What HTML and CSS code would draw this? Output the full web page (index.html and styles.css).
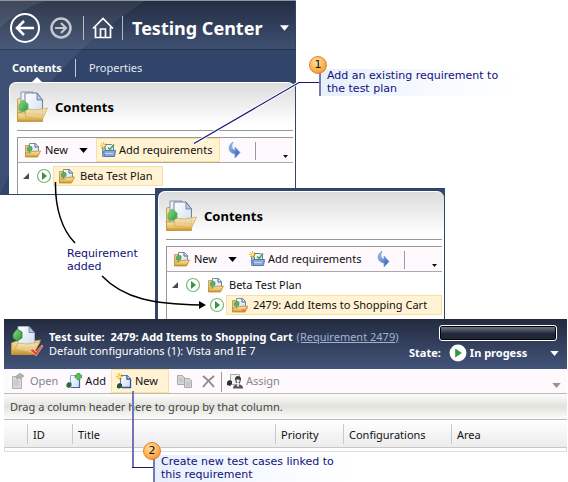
FILE: index.html
```html
<!DOCTYPE html>
<html lang="en">
<head>
<meta charset="utf-8">
<title>Testing Center</title>
<link rel="stylesheet" href="styles.css">
</head>
<body>
<svg class="defs" aria-hidden="true">
  <defs>
    <linearGradient id="gold" x1="0" y1="0" x2="0" y2="1"><stop offset="0" stop-color="#f7e3a8"/><stop offset=".6" stop-color="#e8c26a"/><stop offset="1" stop-color="#c48d24"/></linearGradient>
    <linearGradient id="flap" x1="0" y1="0" x2="0" y2="1"><stop offset="0" stop-color="#f6e3b0"/><stop offset="1" stop-color="#e6c273"/></linearGradient>
    <linearGradient id="paper" x1="0" y1="0" x2="1" y2="1"><stop offset="0" stop-color="#fff"/><stop offset="1" stop-color="#cddcf0"/></linearGradient>
    <linearGradient id="blue" x1="0" y1="0" x2="1" y2="1"><stop offset="0" stop-color="#a9c8f0"/><stop offset="1" stop-color="#2458b4"/></linearGradient>
    <linearGradient id="leaf" x1="0" y1="0" x2="1" y2="1"><stop offset="0" stop-color="#8ce07f"/><stop offset="1" stop-color="#2e9140"/></linearGradient>
  </defs>
  <symbol id="folder" viewBox="0 0 32 32">
    <path d="M.5 8l4-1v4l4 2v17h-8z" fill="url(#gold)" stroke="#b8934a" stroke-width=".8"/>
    <path d="M4 1h12v24H6L4 22z" fill="#eef3fa" stroke="#8795ab"/>
    <path d="M8 2h12l5.500 7v17H8z" fill="url(#paper)" stroke="#71819a"/>
    <path d="M20 2v7h5.500z" fill="#b8cbe4" stroke="#5f7697" stroke-width=".8"/>
    <path d="M.5 22h8l17 2v6.500H.5z" fill="url(#gold)" stroke="#bd9242" stroke-width=".8"/>
    <path d="M8 18l10 1 12.500-2-5 11-17-2z" fill="url(#flap)" fill-opacity=".88" stroke="#d3ab5c" stroke-width=".8"/>
    <path d="M2 14l4-5 5 4v5l-5 3-4-2z" fill="url(#leaf)" stroke="#58b65b" stroke-width=".8"/>
  </symbol>
  <symbol id="suite" viewBox="0 0 32 32">
    <path d="M.5 18l10-4h7l1 3 11-2-7 14.500H.5z" fill="url(#gold)" stroke="#c79b47" stroke-width=".8"/>
    <path d="M7 1.500h11l5.500 6V22H7z" fill="url(#paper)" stroke="#a6b5cb" stroke-width=".8"/>
    <path d="M18 1.500v6h5.500z" fill="#b8cbe4" stroke="#5f7697" stroke-width=".8"/>
    <path d="M7 18l9 1 13-2-7 11-18-4z" fill="url(#flap)" fill-opacity=".85" stroke="#d3ab5c" stroke-width=".8"/>
    <path d="M2 9l4-5 5 3v6l-5 3-4-3z" fill="url(#leaf)" stroke="#2f7a3a" stroke-width=".8"/>
  </symbol>
  <symbol id="check" viewBox="0 0 32 32">
    <path d="M19 25l3-1 3 3 6-7 1 1-7 10z" fill="#e8492e" stroke="#f6c0b0" stroke-width=".7"/>
  </symbol>
  <symbol id="folder-small" viewBox="0 0 16 16">
    <path d="M.5 3.500h4v11h-4z" fill="#e7c57b" stroke="#b6924c" stroke-width=".8"/>
    <path d="M4.500 1.500h6l3 3v8h-9z" fill="url(#paper)" stroke="#7e8ca3"/>
    <path d="M10 1.500V5h3.500" fill="none" stroke="#4a6288"/>
    <path d="M.5 11h5l1-1.500 9-.5-3 6H.5z" fill="url(#gold)" stroke="#bd8d31" stroke-width=".8"/>
    <path d="M2.500 6l2-2 2.500 1v3l-2 1.500-2.500-1z" fill="#58b45a" stroke="#388d45" stroke-width=".6"/>
  </symbol>
  <symbol id="plan" viewBox="0 0 16 16">
    <path d="M2.500 5.500h10v9h-10z" fill="#a4bbdf" stroke="#6f8cbc"/>
    <path d="M5.500 2.500h6l2 2v6h-8z" fill="url(#paper)" stroke="#6480ad"/>
    <path d="M3.500 9.500l2-1h10l-1 6h-10z" fill="#8ba9d8" stroke="#5576ab"/>
    <path d="M5 11.500h8" stroke="#c6d7f0"/>
    <path d="M8 5.500l2 2 4-5" fill="none" stroke="#45a14a" stroke-width="1.500"/>
    <path d="M3.500 0v7M0 3.500h7M1 1l5 5M6 1L1 6" stroke="#f1bd26"/><path d="M2.500 2.500h2v2h-2z" fill="#fff6b4"/>
  </symbol>
  <symbol id="refresh" viewBox="0 0 16 18">
    <path d="M6 1C0 5 1 12 8 13v4l5-5.500L8 6v3.500C4.500 8 4 5 6 1z" fill="url(#blue)" stroke="#6f98d8" stroke-width=".7"/>
  </symbol>
  <symbol id="play" viewBox="0 0 16 16">
    <circle cx="8" cy="8" r="6.500" fill="#fff" stroke="#77b879" stroke-width="1.200"/>
    <path d="M6 4l5 4-5 4z" fill="#369443"/>
  </symbol>
  <symbol id="expand" viewBox="0 0 8 8"><path d="M7 1v6H1z" fill="#4a4a4a"/></symbol>
  <symbol id="caret" viewBox="0 0 10 6"><path d="M0 0h10L5 6z" fill="currentColor"/></symbol>
  <symbol id="open" viewBox="0 0 16 18">
    <path d="M1.500 4.500h7l2 2v10h-9z" fill="#d9d9d9" stroke="#b0b0b0"/>
    <path d="M3 9h5M3 11h5M3 13h5" stroke="#bdbdbd"/>
    <path d="M5 6c0-3 2-4 4-4V1l4 3-4 3V5C7 5 7 6 7 7z" fill="#b3b3b3" stroke="#999" stroke-width=".6"/>
  </symbol>
  <symbol id="add" viewBox="0 0 16 16">
    <path d="M4.500 2.500h9v12h-9z" fill="url(#paper)" stroke="#8fabd6"/>
    <path d="M13.500 6v8.500H5" fill="none" stroke="#3867ae" stroke-width="1.200"/>
    <path d="M.5 11l2-2 3 1v3l-2.500 2-2.500-1z" fill="#33683f"/>
    <path d="M11 0h3v2h2v3h-2v2h-3V5H9V2h2z" fill="#57bd59" stroke="#398f41" stroke-width=".5"/>
  </symbol>
  <symbol id="new" viewBox="0 0 16 16">
    <path d="M4.500 2.500h7l3 3v9h-10z" fill="url(#paper)" stroke="#5c7db4"/>
    <path d="M14.500 6v8.500H6M11 2.500V6h3.500" fill="none" stroke="#2d599f" stroke-width="1.300"/>
    <path d="M1 12l2-2 3 1v3l-2.500 1.500L1 15z" fill="#2b512e"/>
    <path d="M3.500 0v7M0 3.500h7M1 1l5 5M6 1L1 6" stroke="#f1bd26"/><path d="M2.500 2.500h2v2h-2z" fill="#fff6b4"/>
  </symbol>
  <symbol id="copy" viewBox="0 0 16 14">
    <path d="M.5 1.500h5l2 2v7h-7zM7.500 4.500h5l2 2v7h-7z" fill="#d4d4d4" stroke="#aaa"/>
    <path d="M2 5h4M2 7h4M9 9h4M9 11h4" stroke="#bbb"/>
  </symbol>
  <symbol id="delete" viewBox="0 0 13 13"><path d="M1 1c4 3 8 7 11 11M12 1C8 4 4 8 1 12" fill="none" stroke="#8d8d8d" stroke-width="2"/></symbol>
  <symbol id="assign" viewBox="0 0 16 16">
    <path d="M3.500 1.500h9v10h-9z" fill="#f2f2f2" stroke="#aaa"/>
    <path d="M0 9l2-2 3 1v3l-2 2-3-1z" fill="#333"/>
    <path d="M8 6c0-4 6-4 6 0l-1 4H9z" fill="#393939"/><path d="M9.500 6.500h3v2L11 10.500l-1.500-2z" fill="#eee"/>
    <path d="M6 15.500c0-3 2-4 3.500-4l1.500 2 1.500-2c1.500 0 3.500 1 3.500 4z" fill="#555"/><path d="M10 11.500h2l-1 3z" fill="#fff"/>
  </symbol>
</svg>

<main class="canvas">
  <section class="window main-window">
    <svg class="sheen" viewBox="0 0 296 195" preserveAspectRatio="none" aria-hidden="true">
      <path d="M0 0h145Q90 35 50 82L0 195z" fill="#fff" fill-opacity=".06"/>
      <path d="M0 0h45Q20 8 0 27z" fill="#fff" fill-opacity=".08"/>
    </svg>
    <header class="nav">
      <button class="plain" aria-label="Back"><svg width="30" height="30" viewBox="0 0 30 30"><circle cx="15" cy="15" r="14" fill="none" stroke="#fff" stroke-width="2"/><path d="M24 15H8M14 8l-7 7 7 7" fill="none" stroke="#fff" stroke-width="2.500"/></svg></button>
      <button class="plain" aria-label="Forward"><svg width="22" height="22" viewBox="0 0 22 22"><circle cx="11" cy="11" r="9.500" fill="none" stroke="#c4c7cd" stroke-width="2.500"/><path d="M5 11h11M11 6l5 5-5 5" fill="none" stroke="#c4c7cd" stroke-width="2.200"/></svg></button>
      <span class="nav-rule"></span>
      <button class="plain" aria-label="Home"><svg width="22" height="22" viewBox="0 0 22 22"><path d="M1 11.500L11 1.500l10 10M3.500 10v10.500h15V10M8.500 20v-8h5v8" fill="none" stroke="#fff" stroke-width="1.700"/></svg></button>
      <span class="nav-rule"></span>
      <h1>Testing Center</h1>
      <button class="plain nav-menu" aria-label="Switch center"><svg width="9" height="6"><use href="#caret"/></svg></button>
    </header>
    <nav class="tabs">
      <a class="tab active" href="#contents">Contents</a>
      <a class="tab" href="#properties">Properties</a>
    </nav>
    <div class="card" id="contents">
      <div class="card-title"><svg width="32" height="32"><use href="#folder"/></svg><h2>Contents</h2></div>
      <div class="card-body">
        <div class="toolbar">
          <button class="tool new-plan"><svg width="16" height="16"><use href="#folder-small"/></svg>New<svg class="drop" width="9" height="5"><use href="#caret"/></svg></button>
          <button class="tool add-req hot"><svg width="16" height="16"><use href="#plan"/></svg>Add requirements</button>
          <button class="tool" aria-label="Refresh"><svg width="16" height="18"><use href="#refresh"/></svg></button>
          <span class="tool-rule"></span>
          <button class="plain overflow" aria-label="More"><svg width="5" height="3"><use href="#caret"/></svg></button>
        </div>
        <ul class="tree">
          <li><svg width="8" height="8"><use href="#expand"/></svg><svg width="16" height="16"><use href="#play"/></svg><span class="node hot"><svg width="16" height="16"><use href="#folder-small"/></svg>Beta Test Plan</span></li>
        </ul>
      </div>
    </div>
  </section>

  <section class="window result-window">
    <div class="card">
      <div class="card-title"><svg width="32" height="32"><use href="#folder"/></svg><h2>Contents</h2></div>
      <div class="card-body">
        <div class="toolbar">
          <button class="tool new-plan"><svg width="16" height="16"><use href="#folder-small"/></svg>New<svg class="drop" width="9" height="5"><use href="#caret"/></svg></button>
          <button class="tool add-req"><svg width="16" height="16"><use href="#plan"/></svg>Add requirements</button>
          <button class="tool" aria-label="Refresh"><svg width="16" height="18"><use href="#refresh"/></svg></button>
          <span class="tool-rule"></span>
          <button class="plain overflow" aria-label="More"><svg width="5" height="3"><use href="#caret"/></svg></button>
        </div>
        <ul class="tree">
          <li><svg width="8" height="8"><use href="#expand"/></svg><svg width="16" height="16"><use href="#play"/></svg><span class="node"><svg width="16" height="16"><use href="#folder-small"/></svg>Beta Test Plan</span></li>
          <li class="child"><svg width="16" height="16"><use href="#play"/></svg><span class="node wide hot"><svg width="16" height="16"><use href="#folder-small"/><use href="#check"/></svg>2479: Add Items to Shopping Cart</span></li>
        </ul>
      </div>
    </div>
  </section>

  <section class="suite-window">
    <header class="suite-head">
      <svg width="32" height="32"><use href="#suite"/><use href="#check"/></svg>
      <div class="suite-text">
        <p><b>Test suite:&nbsp; 2479: Add Items to Shopping Cart</b> <a href="#requirement">(Requirement 2479)</a></p>
        <p>Default configurations (1): Vista and IE 7</p>
      </div>
      <div class="suite-state">
        <div class="meter"></div>
        <div class="state-row">
          <label for="state">State:</label>
          <svg width="18" height="18" viewBox="0 0 16 16"><circle cx="8" cy="8" r="7.500" fill="#fff"/><path d="M5.500 4l6 4-6 4z" fill="#369443"/></svg>
          <select id="state"><option>In progess</option></select>
          <svg class="state-caret" width="9" height="5"><use href="#caret"/></svg>
        </div>
      </div>
    </header>
    <div class="suite-tools">
      <button class="tool" disabled><svg width="16" height="18"><use href="#open"/></svg>Open</button>
      <button class="tool"><svg width="16" height="16"><use href="#add"/></svg>Add</button>
      <button class="tool hot"><svg width="16" height="16"><use href="#new"/></svg>New</button>
      <button class="tool" aria-label="Copy" disabled><svg width="16" height="14"><use href="#copy"/></svg></button>
      <button class="tool" aria-label="Remove" disabled><svg width="13" height="13"><use href="#delete"/></svg></button>
      <span class="tool-rule"></span>
      <button class="tool" disabled><svg width="16" height="16"><use href="#assign"/></svg>Assign</button>
      <button class="plain more" aria-label="More"><svg width="9" height="5"><use href="#caret"/></svg></button>
    </div>
    <p class="group-bar">Drag a column header here to group by that column.</p>
    <table>
      <thead><tr>
        <th class="c-mark"></th><th class="c-id">ID</th><th>Title</th><th class="c-priority">Priority</th><th class="c-config">Configurations</th><th class="c-area">Area</th>
      </tr></thead>
    </table>
  </section>

  <svg class="connectors" width="568" height="482" viewBox="0 0 568 482" aria-hidden="true">
    <path d="M194 143.500L299 82.500h21" fill="none" stroke="#fff" stroke-width="3"/>
    <path d="M194 143.500L299 82.500h21" fill="none" stroke="#16167a" stroke-width="1.200"/>
    <path d="M133 391v76" stroke="#7474b4" stroke-width="2"/>
    <path d="M132 467.500h21" stroke="#16167a"/>
    <path d="M55.500 182C55 208 62 230 75 243M102 276c22 23 52 28 98 29" fill="none" stroke="#000" stroke-width="1.500"/>
    <path d="M199 301l7 4-7 4z"/>
  </svg>
  <p class="note">Requirement<br>added</p>
  <div class="callout callout-one"><span class="badge">1</span>Add an existing requirement to<br>the test plan</div>
  <div class="callout callout-two"><span class="badge">2</span>Create new test cases linked to<br>this requirement</div>
</main>
</body>
</html>
```

FILE: styles.css
```css
* { box-sizing: border-box; }
body { margin: 0; background: #fff; color: #111; font: 11px/16px "Noto Sans", "Open Sans", sans-serif; }
h1, h2, p, ul { margin: 0; padding: 0; }
ul { list-style: none; }
svg { display: block; flex: none; }
button, select { font: inherit; color: inherit; border: 0; background: none; padding: 0; }
.defs { position: absolute; width: 0; height: 0; }
.canvas { position: relative; min-height: 482px; overflow: hidden; }

/* windows on the canvas */
.window { position: absolute; background: #31456a; }
.main-window { left: 0; top: 0; width: 296px; border-top: 1px solid #8f949e; padding: 0 1px 1px 0; }
.result-window { left: 155px; top: 188px; width: 290px; padding: 3px 1px 0 3px; }
.suite-window { position: absolute; left: 4px; right: 1px; top: 319px; border-bottom: 1px solid #ddd; padding-bottom: 3px; background: #fff; box-shadow: inset 1px 0 #ddd, inset -1px 0 #ddd; }
.sheen { position: absolute; left: 0; top: 0; width: 100%; height: 100%; }

.nav { display: flex; align-items: center; height: 49px; padding: 5px 6px 0 10px; color: #fff; background: linear-gradient(#242d42, #3e5072); border-bottom: 1px solid #26324a; }
.plain { display: flex; position: relative; }
.nav .plain + .plain { margin-left: 10px; }
.nav-rule { width: 1px; height: 24px; margin: 0 8px 0 11px; background: #b5b9c2; }
.nav-rule + .plain + .nav-rule { margin: 0 9px 0 8px; }
h1 { position: relative; font-size: 18px; line-height: 24px; font-weight: 700; }
.nav .nav-menu { margin-left: auto; }
.tabs { display: flex; height: 32px; padding: 9px 12px 0; color: #e3e7ef; }
.tab { position: relative; height: 18px; line-height: 18px; color: inherit; text-decoration: none; }
.tab.active { font-weight: 700; color: #fff; }
.tab + .tab { margin-left: 13px; padding-left: 13px; border-left: 1px solid #c5cad4; }
.tab.active::after { content: ""; position: absolute; left: 20px; top: 18px; border: 5px solid transparent; border-top: 0; border-bottom-color: #fff; }

.card { position: relative; padding: 0 2px 0 7px; border: solid #fff; border-width: 1px 0 0 1px; border-radius: 7px 7px 0 0; background: linear-gradient(#dcdcdc, #fff 42px); }
.main-window .card { margin-left: 9px; }
.card-title { display: flex; align-items: center; gap: 6px; height: 48px; border-bottom: 1px solid #999; }
.card-title h2 { font-size: 13px; line-height: 18px; color: #000; }
.card-body { margin-top: 6px; border: solid #999; border-width: 1px 0 0 1px; background: #fff; }
.toolbar { display: flex; height: 25px; background: #fdf9fd; border-bottom: 1px solid #aaa; }
.tool { display: flex; align-items: center; gap: 4px; }
.hot { background: #fff3d4; box-shadow: inset 0 0 0 1px #f9e0a0; }
.new-plan { width: 78px; padding-left: 7px; }
.drop { width: 9px; margin-left: 7px; color: #000; }
.toolbar .add-req { width: 124px; padding-left: 4px; margin-right: 7px; gap: 3px; }
.tool-rule { width: 1px; height: 18px; margin: 4px 0 0 12px; background: #999; }
.overflow { margin: 17px 5px 0 auto; height: 3px; }
.tree { padding: 3px 0 5px 4px; }
.tree li { display: flex; align-items: center; height: 20px; }
.tree svg + svg { margin-left: 6px; }
.tree .child { padding-left: 38px; }
.node { display: flex; align-items: center; gap: 5px; height: 20px; margin-left: 1px; padding: 0 11px 0 6px; white-space: nowrap; }
.main-window .tree { padding-bottom: 8px; }
.wide { flex: 1; }

/* test suite panel */
.suite-head { display: flex; height: 50px; padding: 6px 10px 0 7px; gap: 6px; color: #fff; background: linear-gradient(#232b3e, #43547a); }
.suite-text { flex: 1; min-width: 0; padding-top: 5px; line-height: 14px; white-space: nowrap; }
.suite-text a { margin-left: 1px; color: #9fb4d3; }
.suite-state { width: 148px; font-weight: 700; }
.meter { width: 118px; height: 16px; margin-left: auto; border: 1px solid #fff; border-radius: 3px; box-shadow: inset 0 0 0 1px #000; background: linear-gradient(#78808c, #2b3343 50%, #20283a 51%); }
.state-row { display: flex; align-items: center; height: 24px; }
.state-row svg { margin-left: 8px; }
.state-row .state-caret { margin-right: -2px; }
.state-row select { appearance: none; flex: 1; margin-left: 3px; }
.suite-tools { display: flex; height: 25px; padding-left: 7px; background: #fdf9fd; border-bottom: 1px solid #bbb; }
.suite-tools .tool { padding: 0 4px 0 0; gap: 3px; }
.suite-tools .tool:disabled { color: #858585; }
.suite-tools .tool + .tool { padding-left: 4px; }
.suite-tools .tool + .hot { padding: 0 11px 0 5px; margin: 0 4px 0 1px; }
.suite-tools [aria-label="Remove"] { margin-left: 1px; }
.suite-tools .tool-rule { height: 20px; margin: 3px 5px 0 2px; }
.more { margin: 14px 6px 0 auto; height: 5px; color: #969288; }
.group-bar { height: 26px; padding-left: 6px; line-height: 25px; color: #444; background: linear-gradient(#fcfcfb, #e3e3dd 50%, #fcfcfb); border-bottom: 1px solid #bbb; }
table { width: 100%; table-layout: fixed; border-collapse: collapse; background: linear-gradient(#fff, #ececef); border-bottom: 1px solid #c9c9c2; }
th { height: 27px; padding: 4px 0 0 6px; text-align: left; font-weight: 400; background: linear-gradient(#c9c9c9, #c9c9c9) 0 4px / 1px 20px no-repeat; }
th.c-mark { width: 23px; background: none; }
.c-id { width: 45px; }
.c-priority { width: 68px; }
.c-config { width: 108px; }
.c-area { width: 116px; }

/* annotations */
.connectors { position: absolute; left: 0; top: 0; }
.note, .callout { position: absolute; font: 11px/13px "DejaVu Sans", sans-serif; color: #10107a; white-space: nowrap; }
.note { left: 67px; top: 247px; }
.callout { width: 197px; height: 27px; padding-left: 6px; border-left: 2px solid #7878b4; background: linear-gradient(100deg, #e6effd, #f5f9ff 50%, #fff); }
.callout-one { left: 319px; top: 69px; }
.callout-two { left: 153px; top: 455px; }
.badge { position: absolute; left: -12px; top: -13px; width: 18px; height: 18px; border: 1px solid #e0812f; border-radius: 50%; background: radial-gradient(circle at 40% 30%, #ffdf9e, #fbae4c 60%, #e9822a); text-align: center; line-height: 16px; color: #111; }
```
